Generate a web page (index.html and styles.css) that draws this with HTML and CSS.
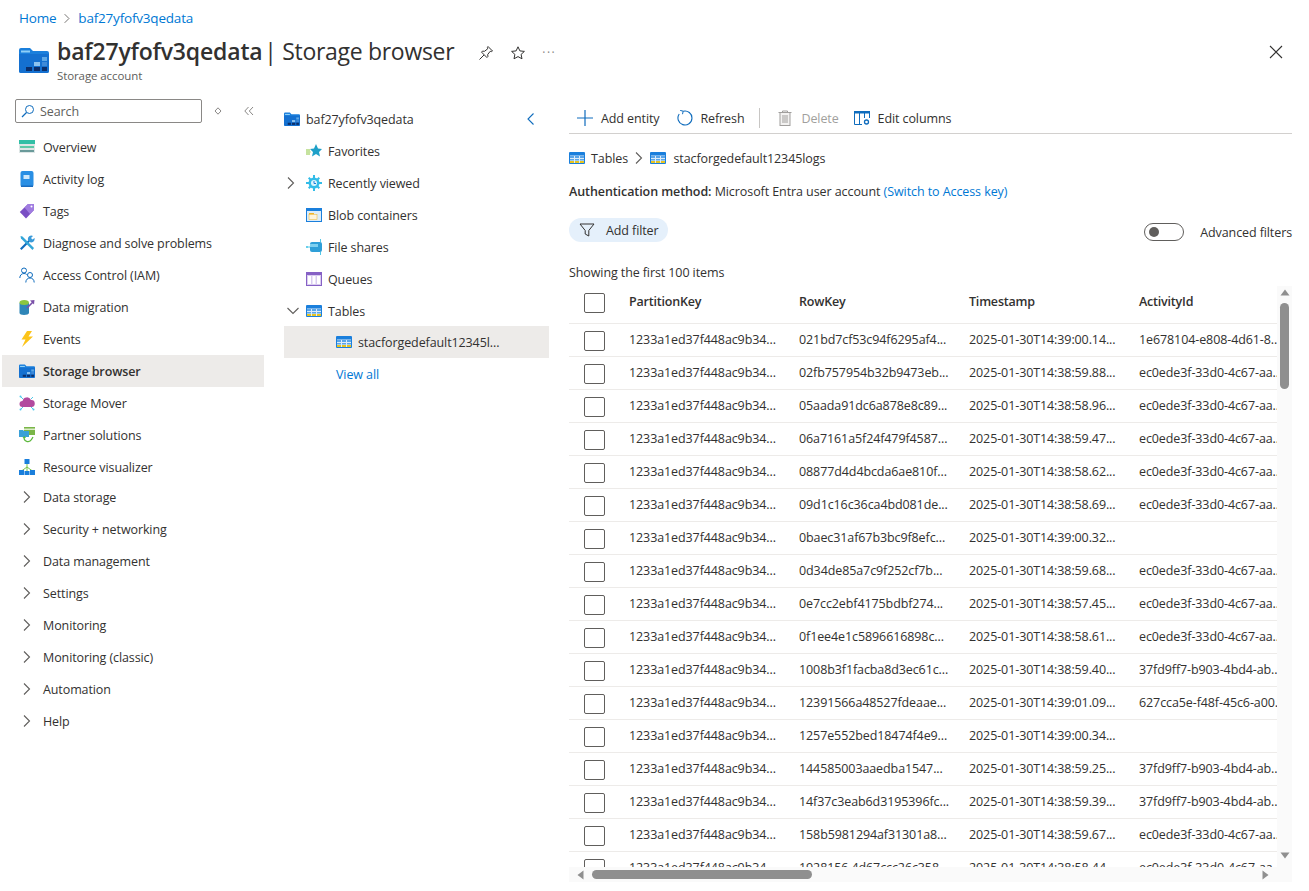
FILE: index.html
```html
<!DOCTYPE html>
<html lang="en">
<head>
    <meta charset="UTF-8">
    <title>baf27yfofv3qedata | Storage browser</title>
    <link rel="stylesheet" href="styles.css">
</head>
<body>
    <svg class="defs" width="0" height="0">
        <symbol id="i-storage" viewBox="0 0 30 26">
            <path d="M0 3a2 2 0 0 1 2-2h9l3 3h14a2 2 0 0 1 2 2v18a2 2 0 0 1-2 2H2a2 2 0 0 1-2-2z" fill="#1a7fdc"/>
            <path d="M0 7h30v17a2 2 0 0 1-2 2H2a2 2 0 0 1-2-2z" fill="#1470d0"/>
            <rect x="2" y="3.500" width="9" height="2" fill="#8fd0f7"/>
            <rect x="23" y="10" width="5" height="4" fill="#5ea8e6"/>
            <rect x="15" y="15" width="6" height="4" fill="#8cc3ef"/>
            <rect x="23" y="15" width="5" height="4" fill="#3f8ad8"/>
            <rect x="7" y="20" width="6" height="4" fill="#0b2f6b"/>
            <rect x="15" y="20" width="6" height="4" fill="#0b2f6b"/>
            <rect x="23" y="20" width="5" height="4" fill="#0b2f6b"/>
        </symbol>
        <symbol id="i-table" viewBox="0 0 16 12">
            <rect width="16" height="12" rx="1" fill="#1a7fdc"/>
            <rect x="1" y="3.500" width="14" height="7.500" fill="#dcecf9"/>
            <path d="M1 4h4v2H1zm5 0h4v2H6zm5 0h4v2h-4zM1 7h4v1.500H1zm5 0h4v1.500H6zm5 0h4v1.500h-4z" fill="#5aa5e8"/>
            <path d="M1 9h4v2H1zm5 0h4v2H6zm5 0h4v2h-4z" fill="#e8c41f"/>
        </symbol>
        <symbol id="i-chev-right" viewBox="0 0 10 14">
            <path d="M2 1.500 7.500 7 2 12.500" fill="none" stroke="#605e5c" stroke-width="1.100"/>
        </symbol>
        <symbol id="i-chev-down" viewBox="0 0 14 10">
            <path d="M1.500 2 7 7.500 12.500 2" fill="none" stroke="#605e5c" stroke-width="1.100"/>
        </symbol>
    </svg>

    <header class="page-head">
        <nav class="crumbs">
            <a href="#">Home</a>
            <svg class="crumb-sep" width="10" height="14"><use href="#i-chev-right"/></svg>
            <a href="#">baf27yfofv3qedata</a>
        </nav>
        <div class="title-row">
            <svg class="title-icon" width="30" height="26"><use href="#i-storage"/></svg>
            <div class="title-text">
                <h1><b>baf27yfofv3qedata</b> | Storage browser</h1>
                <p>Storage account</p>
            </div>
            <div class="title-actions">
                <svg width="16" height="16" viewBox="0 0 16 16"><path d="M10 1.500 14.500 6l-1 .6-1.300-.3L9.700 9.500l.2 2-1 1L3.500 7.100l1-1 2 .2 3.200-2.500-.3-1.300zM6 10l-4.500 4.500" fill="none" stroke="#323130"/></svg>
                <svg width="16" height="16" viewBox="0 0 16 16"><path d="m8 1.800 1.900 4.100 4.500.5-3.300 3 .9 4.400L8 11.600l-4 2.200.9-4.400-3.300-3 4.500-.5z" fill="none" stroke="#323130"/></svg>
                <span class="more">···</span>
            </div>
            <svg class="close" width="14" height="14" viewBox="0 0 14 14"><path d="m1 1 12 12M13 1 1 13" stroke="#323130" stroke-width="1.100"/></svg>
        </div>
    </header>

    <main class="layout">
        <aside class="sidebar">
            <div class="search-row">
                <div class="search">
                    <svg width="14" height="14" viewBox="0 0 14 14"><circle cx="8.500" cy="5.500" r="4" fill="none" stroke="#0f6cbd"/><path d="M5.500 8.500 1 13" stroke="#0f6cbd" stroke-width="1.200"/></svg>
                    <span>Search</span>
                </div>
                <svg class="search-sort" width="8" height="8" viewBox="0 0 8 8"><path d="M4 .8 7 4 4 7.200 1 4z" fill="none" stroke="#8a8886"/></svg>
                <svg class="search-collapse" width="10" height="10" viewBox="0 0 10 10"><path d="M4.500 1 .8 5l3.700 4M9 1 5.300 5 9 9" fill="none" stroke="#8a8886"/></svg>
            </div>
            <ul class="menu">
                <li><svg width="16" height="16" viewBox="0 0 16 16"><rect y="1" width="16" height="4" fill="#32bfa6"/><rect y="5" width="16" height="9" fill="#dde6e6"/><rect x="1" y="7" width="14" height="2" fill="#5ec9a8"/><rect x="1" y="11" width="14" height="2" fill="#6a9a9a"/></svg>Overview</li>
                <li><svg width="16" height="16" viewBox="0 0 16 16"><rect x="1.500" width="13" height="16" rx="2" fill="#2a8fe4"/><rect x="4.500" y="4" width="6" height="4" fill="#cfe8fb"/><rect x="2" y="14.500" width="12" height="1.500" fill="#1a6cc0"/></svg>Activity log</li>
                <li><svg width="16" height="16" viewBox="0 0 16 16"><path d="M9 1h6v6l-8 8.500L.8 9z" fill="#7a4fc4"/><path d="M9 1h6v6l-4 4-5.500-6.500z" fill="#a07ce0"/><circle cx="12.500" cy="3.500" r="1" fill="#fff"/></svg>Tags</li>
                <li><svg width="16" height="16" viewBox="0 0 16 16"><path d="M1 13.500 9.500 5 11 6.500 2.500 15z" fill="#0f6cbd"/><path d="M9 5a3.500 3.500 0 0 1 5-4l-2 2 1.500 1.500 2-1.500a3.500 3.500 0 0 1-5 4z" fill="#3a9ad9"/><path d="m1.500 1 2 .5L15 13l-1.500 2L2 3.500z" fill="#32a6d8"/></svg>Diagnose and solve problems</li>
                <li><svg width="16" height="16" viewBox="0 0 16 16"><g fill="none" stroke="#0f6cbd"><circle cx="5" cy="3.500" r="2.500"/><path d="M.8 11c0-3 2-4.500 4.200-4.500 1 0 2 .3 2.700 1"/><circle cx="11" cy="8" r="2.500"/><path d="M6.800 15.500c0-3 2-4.500 4.200-4.500s4.200 1.500 4.200 4.500"/></g></svg>Access Control (IAM)</li>
                <li><svg width="16" height="16" viewBox="0 0 16 16"><path d="M.5 4v10c0 1 2 2 4.500 2s5-1 5-2V4z" fill="#2f86b8"/><ellipse cx="5.200" cy="3.500" rx="4.700" ry="2.500" fill="#8cc63f"/><path d="m8 9 6-6" stroke="#7a4fa8" stroke-width="1.600"/><path d="m11 1.500 4.500-.5-.5 4.500z" fill="#7a4fa8"/></svg>Data migration</li>
                <li><svg width="16" height="16" viewBox="0 0 16 16"><path d="M8 0h5L9.500 5.500H14L3 16l3.500-7.500H2.500z" fill="#fcc419"/></svg>Events</li>
                <li class="selected"><svg width="16" height="14"><use href="#i-storage"/></svg>Storage browser</li>
                <li><svg width="16" height="16" viewBox="0 0 16 16"><path d="M3.500 12a3 3 0 0 1 0-6 4.500 4.500 0 0 1 8.500-1 3.500 3.500 0 0 1 .5 7z" fill="#b24a9e"/><g stroke="#50c8e8"><path d="M2 2l2 2M14 14l-2-2M2 14l2-2M14 2l-2 2"/></g><g fill="#50c8e8"><circle cx="1.500" cy="1.500" r="1"/><circle cx="14.500" cy="14.500" r="1"/><circle cx="1.500" cy="14.500" r="1"/></g></svg>Storage Mover</li>
                <li><svg width="16" height="16" viewBox="0 0 16 16"><rect x="5" y="0" width="11" height="8" fill="#7ab648"/><rect x="5" y="1.500" width="11" height="1.500" fill="#dcecc8"/><path d="M0 3h4l1 1h5v6H0z" fill="#3aa0d8"/><path d="M5 11a4 4 0 0 0 7.500 1.500L14 10" fill="none" stroke="#5cb83c" stroke-width="1.300"/><path d="m3.500 11 1.800-2 1.800 2z" fill="#5cb83c"/></svg>Partner solutions</li>
                <li><svg width="16" height="16" viewBox="0 0 16 16"><path d="M8 4v5M2.500 12 8 8l5.500 4M8 8v5" fill="none" stroke="#7ac34a"/><rect x="5.500" y="0" width="5" height="5" fill="#1a7fdc"/><rect x="0" y="11" width="5" height="5" fill="#1a7fdc"/><rect x="5.500" y="12" width="5" height="4" fill="#1a7fdc"/><rect x="11" y="11" width="5" height="5" fill="#1a7fdc"/></svg>Resource visualizer</li>
            </ul>
            <ul class="menu groups">
                <li><svg width="10" height="14"><use href="#i-chev-right"/></svg>Data storage</li>
                <li><svg width="10" height="14"><use href="#i-chev-right"/></svg>Security + networking</li>
                <li><svg width="10" height="14"><use href="#i-chev-right"/></svg>Data management</li>
                <li><svg width="10" height="14"><use href="#i-chev-right"/></svg>Settings</li>
                <li><svg width="10" height="14"><use href="#i-chev-right"/></svg>Monitoring</li>
                <li><svg width="10" height="14"><use href="#i-chev-right"/></svg>Monitoring (classic)</li>
                <li><svg width="10" height="14"><use href="#i-chev-right"/></svg>Automation</li>
                <li><svg width="10" height="14"><use href="#i-chev-right"/></svg>Help</li>
            </ul>
        </aside>

        <section class="tree">
            <div class="tree-row">
                <svg width="16" height="14"><use href="#i-storage"/></svg>
                <span class="grow">baf27yfofv3qedata</span>
                <svg class="tree-close" width="10" height="14" viewBox="0 0 10 14"><path d="M7.500 1.500 2 7l5.500 5.500" fill="none" stroke="#0f6cbd" stroke-width="1.100"/></svg>
            </div>
            <div class="tree-row"><i class="caret"></i><svg width="16" height="16" viewBox="0 0 16 16"><path d="m10 1 2 4.500 4 .4-3 3 1 4.600-4-2.400-4 2.400 1-4.600-3-3 4-.4z" fill="#1ea0c8"/><path d="M0 7h4M0 9h4.500M0 11h4" stroke="#8cc63f"/></svg>Favorites</div>
            <div class="tree-row"><i class="caret"><svg width="10" height="14"><use href="#i-chev-right"/></svg></i><svg width="16" height="16" viewBox="0 0 16 16"><circle cx="8" cy="8" r="5.500" fill="#32bce8"/><path d="M7 0h2v3H7zM7 13h2v3H7zM0 7h3v2H0zM13 7h3v2h-3zM2 3.400 3.400 2l2 2L4 5.400zM10.600 12l1.400-1.400 2 2L12.600 14zM2 12.600 4 10.600l1.400 1.400-2 2zM10.600 4l2-2L14 3.400l-2 2z" fill="#32bce8"/><circle cx="8" cy="8" r="3" fill="#dff4fb"/><path d="M8 6v2.500h2" fill="none" stroke="#1a7fdc"/></svg>Recently viewed</div>
            <div class="tree-row"><i class="caret"></i><svg width="16" height="16" viewBox="0 0 16 16"><rect y="1" width="16" height="14" fill="#1a7fdc"/><rect x="1" y="4" width="14" height="10" fill="#dcecf9"/><rect x="3" y="6" width="5" height="1.500" fill="#f0b429"/><rect x="3" y="7.500" width="8" height="5" fill="#fdf3dc" stroke="#f0b429" stroke-width=".5"/></svg>Blob containers</div>
            <div class="tree-row"><i class="caret"></i><svg width="16" height="16" viewBox="0 0 16 16"><rect x="4" y="3" width="12" height="10" rx="2" fill="#2f9fd8"/><path d="M4 5h8v3H4z" fill="#7fd0f0"/><path d="M0 8h4M14.500 0v3M14.500 13v3" stroke="#50c8e8"/><circle cx="1" cy="8" r="1" fill="#50c8e8"/></svg>File shares</div>
            <div class="tree-row"><i class="caret"></i><svg width="16" height="16" viewBox="0 0 16 16"><rect y="1" width="16" height="14" fill="#8661c5"/><rect x="1" y="4" width="14" height="10" fill="#d9ccf0"/><path d="M2 5h3v8H2zM6.500 5h3v8h-3zM11 5h3v8h-3z" fill="#fff"/></svg>Queues</div>
            <div class="tree-row"><i class="caret"><svg width="14" height="10"><use href="#i-chev-down"/></svg></i><svg width="16" height="12"><use href="#i-table"/></svg>Tables</div>
            <div class="tree-row tree-child selected"><svg width="16" height="12"><use href="#i-table"/></svg><span>stacforgedefault12345l...</span></div>
            <a class="view-all" href="#">View all</a>
        </section>

        <section class="content">
            <div class="toolbar">
                <button class="tool tool-add"><svg width="16" height="16" viewBox="0 0 16 16"><path d="M8 0v16M0 8h16" stroke="#0f6cbd" stroke-width="1.200"/></svg>Add entity</button>
                <button class="tool tool-refresh"><svg width="16" height="16" viewBox="0 0 16 16"><path d="M6.200 1.200A7 7 0 1 1 2.200 4" fill="none" stroke="#0f6cbd" stroke-width="1.100"/><path d="M3.200.4 6.200 1.200 5.500 4.200" fill="none" stroke="#0f6cbd"/></svg>Refresh</button>
                <span class="tool-sep"></span>
                <button class="tool tool-delete"><svg width="16" height="16" viewBox="0 0 16 16"><path d="M1.500 2.500h13M5.500 2.500V1h5v1.500" fill="none" stroke="#a19f9d"/><rect x="3" y="2.500" width="10" height="13" fill="#f3f2f1" stroke="#a19f9d"/><path d="M6 5v8M8 5v8M10 5v8" stroke="#a19f9d"/></svg>Delete</button>
                <button class="tool"><svg width="16" height="14" viewBox="0 0 16 14"><path d="M0 0h16v2.500H0z" fill="#0f6cbd"/><path d="M.5 2v11.500H8M5.500 2v11.500M10.500 2v5M15.500 2v5" fill="none" stroke="#0f6cbd"/><circle cx="12.500" cy="11" r="2" fill="none" stroke="#0f6cbd" stroke-width="1.300"/></svg>Edit columns</button>
            </div>
            <div class="path">
                <svg width="16" height="12"><use href="#i-table"/></svg>
                <span>Tables</span>
                <svg width="10" height="14"><use href="#i-chev-right"/></svg>
                <svg width="16" height="12"><use href="#i-table"/></svg>
                <span class="path-name">stacforgedefault12345logs</span>
            </div>
            <p class="auth"><b>Authentication method:</b> Microsoft Entra user account <a href="#">(Switch to Access key)</a></p>
            <div class="filter-row">
                <button class="pill"><svg width="16" height="16" viewBox="0 0 16 16"><path d="M1 2h14L9.800 8.500V14L6.200 12V8.500z" fill="none" stroke="#323130"/></svg>Add filter</button>
                <div class="adv">
                    <span class="toggle"><i></i></span>
                    <span>Advanced filters</span>
                </div>
            </div>
            <p class="count">Showing the first 100 items</p>
            <div class="grid-wrap">
                <div class="grid-view">
                    <table class="grid">
                        <thead>
                            <tr><th><span class="check"></span></th><th>PartitionKey</th><th>RowKey</th><th>Timestamp</th><th>ActivityId</th></tr>
                        </thead>
                        <tbody>
                            <tr><td><span class="check"></span></td><td>1233a1ed37f448ac9b34...</td><td>021bd7cf53c94f6295af4...</td><td>2025-01-30T14:39:00.14...</td><td>1e678104-e808-4d61-8...</td></tr>
                            <tr><td><span class="check"></span></td><td>1233a1ed37f448ac9b34...</td><td>02fb757954b32b9473eb...</td><td>2025-01-30T14:38:59.88...</td><td>ec0ede3f-33d0-4c67-aa...</td></tr>
                            <tr><td><span class="check"></span></td><td>1233a1ed37f448ac9b34...</td><td>05aada91dc6a878e8c89...</td><td>2025-01-30T14:38:58.96...</td><td>ec0ede3f-33d0-4c67-aa...</td></tr>
                            <tr><td><span class="check"></span></td><td>1233a1ed37f448ac9b34...</td><td>06a7161a5f24f479f4587...</td><td>2025-01-30T14:38:59.47...</td><td>ec0ede3f-33d0-4c67-aa...</td></tr>
                            <tr><td><span class="check"></span></td><td>1233a1ed37f448ac9b34...</td><td>08877d4d4bcda6ae810f...</td><td>2025-01-30T14:38:58.62...</td><td>ec0ede3f-33d0-4c67-aa...</td></tr>
                            <tr><td><span class="check"></span></td><td>1233a1ed37f448ac9b34...</td><td>09d1c16c36ca4bd081de...</td><td>2025-01-30T14:38:58.69...</td><td>ec0ede3f-33d0-4c67-aa...</td></tr>
                            <tr><td><span class="check"></span></td><td>1233a1ed37f448ac9b34...</td><td>0baec31af67b3bc9f8efc...</td><td>2025-01-30T14:39:00.32...</td><td></td></tr>
                            <tr><td><span class="check"></span></td><td>1233a1ed37f448ac9b34...</td><td>0d34de85a7c9f252cf7b...</td><td>2025-01-30T14:38:59.68...</td><td>ec0ede3f-33d0-4c67-aa...</td></tr>
                            <tr><td><span class="check"></span></td><td>1233a1ed37f448ac9b34...</td><td>0e7cc2ebf4175bdbf274...</td><td>2025-01-30T14:38:57.45...</td><td>ec0ede3f-33d0-4c67-aa...</td></tr>
                            <tr><td><span class="check"></span></td><td>1233a1ed37f448ac9b34...</td><td>0f1ee4e1c5896616898c...</td><td>2025-01-30T14:38:58.61...</td><td>ec0ede3f-33d0-4c67-aa...</td></tr>
                            <tr><td><span class="check"></span></td><td>1233a1ed37f448ac9b34...</td><td>1008b3f1facba8d3ec61c...</td><td>2025-01-30T14:38:59.40...</td><td>37fd9ff7-b903-4bd4-ab...</td></tr>
                            <tr><td><span class="check"></span></td><td>1233a1ed37f448ac9b34...</td><td>12391566a48527fdeaae...</td><td>2025-01-30T14:39:01.09...</td><td>627cca5e-f48f-45c6-a00...</td></tr>
                            <tr><td><span class="check"></span></td><td>1233a1ed37f448ac9b34...</td><td>1257e552bed18474f4e9...</td><td>2025-01-30T14:39:00.34...</td><td></td></tr>
                            <tr><td><span class="check"></span></td><td>1233a1ed37f448ac9b34...</td><td>144585003aaedba1547...</td><td>2025-01-30T14:38:59.25...</td><td>37fd9ff7-b903-4bd4-ab...</td></tr>
                            <tr><td><span class="check"></span></td><td>1233a1ed37f448ac9b34...</td><td>14f37c3eab6d3195396fc...</td><td>2025-01-30T14:38:59.39...</td><td>37fd9ff7-b903-4bd4-ab...</td></tr>
                            <tr><td><span class="check"></span></td><td>1233a1ed37f448ac9b34...</td><td>158b5981294af31301a8...</td><td>2025-01-30T14:38:59.67...</td><td>ec0ede3f-33d0-4c67-aa...</td></tr>
                            <tr><td><span class="check"></span></td><td>1233a1ed37f448ac9b34...</td><td>1928156 4d67ccc26c358...</td><td>2025-01-30T14:38:58.44...</td><td>ec0ede3f-33d0-4c67-aa...</td></tr>
                        </tbody>
                    </table>
                </div>
                <div class="vscroll">
                    <svg width="10" height="7" viewBox="0 0 10 7"><path d="M5 .5 9.500 6.500H.5z" fill="#8f8f8f"/></svg>
                    <div class="vthumb"></div>
                    <svg class="vdown" width="10" height="7" viewBox="0 0 10 7"><path d="M5 6.500 9.500 .5H.5z" fill="#8f8f8f"/></svg>
                </div>
            </div>
            <div class="hscroll">
                <svg width="7" height="10" viewBox="0 0 7 10"><path d="M.5 5 6.500.5v9z" fill="#8f8f8f"/></svg>
                <div class="hthumb"></div>
                <svg class="hright" width="7" height="10" viewBox="0 0 7 10"><path d="M6.500 5 .5.500v9z" fill="#8f8f8f"/></svg>
            </div>
        </section>
    </main>
</body>
</html>
```

FILE: styles.css
```css
html, body {
    height: 100%;
}
body {
    margin: 0;
    overflow: hidden;
    background: #fff;
    color: #323130;
    font-family: "Open Sans", "Noto Sans", Arial, sans-serif;
    font-size: 12.5px;
    letter-spacing: -0.1px;
}
a {
    color: #0078d4;
    text-decoration: none;
}
ul {
    list-style: none;
    margin: 0;
    padding: 0;
}
p {
    margin: 0;
}
button {
    border: none;
    background: none;
    padding: 0;
    color: inherit;
    font: inherit;
    letter-spacing: inherit;
}
svg {
    flex: none;
}
.defs {
    position: absolute;
}

/* header */
.page-head {
    height: 91px;
    padding-left: 19px;
    box-sizing: border-box;
}
.crumbs {
    height: 36px;
    display: flex;
    align-items: center;
    gap: 7px;
    font-size: 13.5px;
    letter-spacing: -0.2px;
}
.crumb-sep {
    width: 8px;
    height: 11px;
}
.title-row {
    display: flex;
    align-items: flex-start;
}
.title-icon {
    margin: 11px 8px 0 0;
}
.title-text h1 {
    margin: -1px 0 1px;
    font-size: 23px;
    font-weight: 400;
    line-height: 32px;
    letter-spacing: -0.3px;
    white-space: nowrap;
}
.title-text h1 b {
    font-weight: 600;
    letter-spacing: -0.17px;
    margin-right: -4px;
}
.title-text p {
    font-size: 11.5px;
    line-height: 16px;
    color: #605e5c;
}
.title-actions {
    display: flex;
    align-items: center;
    gap: 16px;
    margin: 8px 0 0 24px;
}
.more {
    font-size: 12px;
    letter-spacing: 1.5px;
    color: #8a8886;
}
.close {
    margin: 9px 26px 0 auto;
}

/* layout */
.layout {
    display: flex;
    height: 800px;
}
.sidebar {
    width: 262px;
    margin-left: 2px;
    flex: none;
}
.search-row {
    display: flex;
    align-items: center;
    height: 24px;
    margin: 8px 0 8px 13px;
}
.search {
    width: 187px;
    height: 24px;
    box-sizing: border-box;
    display: flex;
    align-items: center;
    gap: 5px;
    padding-left: 5px;
    border: 1px solid #8a8886;
    border-radius: 2px;
    color: #605e5c;
}
.search-sort {
    margin-left: 12px;
}
.search-collapse {
    margin-left: 22px;
}
.menu li {
    height: 32px;
    display: flex;
    align-items: center;
    gap: 8px;
    padding-left: 17px;
    white-space: nowrap;
}
.menu li.selected {
    background: #edebe9;
    font-weight: 600;
}
.groups {
    margin-top: -2px;
}
.groups li {
    padding-left: 20px;
    gap: 11px;
}

/* tree */
.tree {
    width: 265px;
    margin-left: 20px;
    padding-top: 12px;
    flex: none;
}
.tree-row {
    height: 32px;
    display: flex;
    align-items: center;
    gap: 6px;
    white-space: nowrap;
}
.grow {
    flex: 1;
}
.tree-close {
    margin-right: 13px;
}
.caret {
    width: 13px;
    padding-left: 3px;
    flex: none;
    display: flex;
    align-items: center;
}
.tree-row .caret svg {
    margin-left: -1px;
}
.tree-child {
    padding-left: 52px;
    margin-top: -1px;
}
.selected {
    background: #edebe9;
}
.view-all {
    display: block;
    margin: 8px 0 0 52px;
}

/* right side */
.content {
    width: 723px;
    margin-left: 20px;
    flex: none;
    padding-top: 12px;
}
.toolbar {
    display: flex;
    align-items: center;
    height: 31px;
    padding-left: 8px;
    border-bottom: 1px solid #d2d0ce;
    box-sizing: border-box;
}
.tool {
    display: flex;
    align-items: center;
    gap: 8px;
    margin-right: 16px;
}
.tool-add {
    margin-right: 18px;
}
.tool-refresh {
    gap: 7px;
    margin-right: 15px;
}
.tool-delete {
    gap: 8px;
    margin-right: 15px;
    color: #a19f9d;
}
.tool-sep {
    width: 1px;
    height: 20px;
    background: #c8c6c4;
    margin-right: 17px;
}
.path {
    display: flex;
    align-items: center;
    gap: 6px;
    height: 20px;
    margin-top: 14px;
}
.path-name {
    margin-left: 1.500px;
}
.auth {
    line-height: 20px;
    margin-top: 14px;
    letter-spacing: -0.08px;
}
.auth b {
    font-weight: 600;
}
.filter-row {
    display: flex;
    align-items: center;
    justify-content: space-between;
    margin-top: 16px;
}
.pill {
    display: flex;
    align-items: center;
    gap: 11px;
    height: 24px;
    width: 99px;
    box-sizing: border-box;
    padding-left: 10px;
    border-radius: 12px;
    background: #e5f0fb;
}
.adv {
    display: flex;
    align-items: center;
    gap: 16px;
    margin-top: 4px;
}
.toggle {
    width: 40px;
    height: 18px;
    box-sizing: border-box;
    border: 1px solid #605e5c;
    border-radius: 9px;
    display: flex;
    align-items: center;
    padding-left: 4px;
}
.toggle i {
    width: 10px;
    height: 10px;
    border-radius: 50%;
    background: #605e5c;
}
.count {
    line-height: 20px;
    margin-top: 21px;
}

/* table */
.grid-wrap {
    display: flex;
    height: 581px;
    margin-top: 3px;
}
.grid-view {
    width: 708px;
    overflow: hidden;
    flex: none;
}
.grid {
    border-collapse: collapse;
    table-layout: fixed;
    width: 740px;
}
.grid th:nth-child(1) { width: 60px; }
.grid th:nth-child(2),
.grid th:nth-child(3),
.grid th:nth-child(4),
.grid th:nth-child(5) { width: 170px; }
.grid th {
    height: 37px;
    padding: 0 0 5px;
    box-sizing: border-box;
    text-align: left;
    font-weight: 600;
    letter-spacing: -0.2px;
    border-bottom: 1px solid #edebe9;
}
.grid th:first-child {
    padding-bottom: 3px;
}
.grid td {
    height: 33px;
    padding: 0 0 1px;
    box-sizing: border-box;
    white-space: nowrap;
    overflow: hidden;
    border-bottom: 1px solid #edebe9;
}
.grid td:first-child {
    padding: 2px 0 0;
}
.check {
    display: block;
    width: 21px;
    height: 20px;
    margin-left: 15px;
    box-sizing: border-box;
    border: 1px solid #605e5c;
    border-radius: 2px;
    background: #fff;
}
.vscroll {
    width: 15px;
    flex: none;
    background: #fafafa;
    display: flex;
    flex-direction: column;
    align-items: center;
    padding-top: 3px;
    box-sizing: border-box;
}
.vthumb {
    width: 9px;
    height: 86px;
    margin-top: 7px;
    border-radius: 5px;
    background: #8f8f8f;
}
.vdown {
    margin-top: auto;
    margin-bottom: 8px;
}
.hscroll {
    display: flex;
    align-items: center;
    height: 15px;
    background: #fafafa;
    padding-left: 8px;
    width: 723px;
    box-sizing: border-box;
}
.hthumb {
    width: 220px;
    height: 9px;
    margin-left: 8px;
    border-radius: 5px;
    background: #8f8f8f;
}
.hright {
    margin-left: auto;
    margin-right: 23px;
}
```
